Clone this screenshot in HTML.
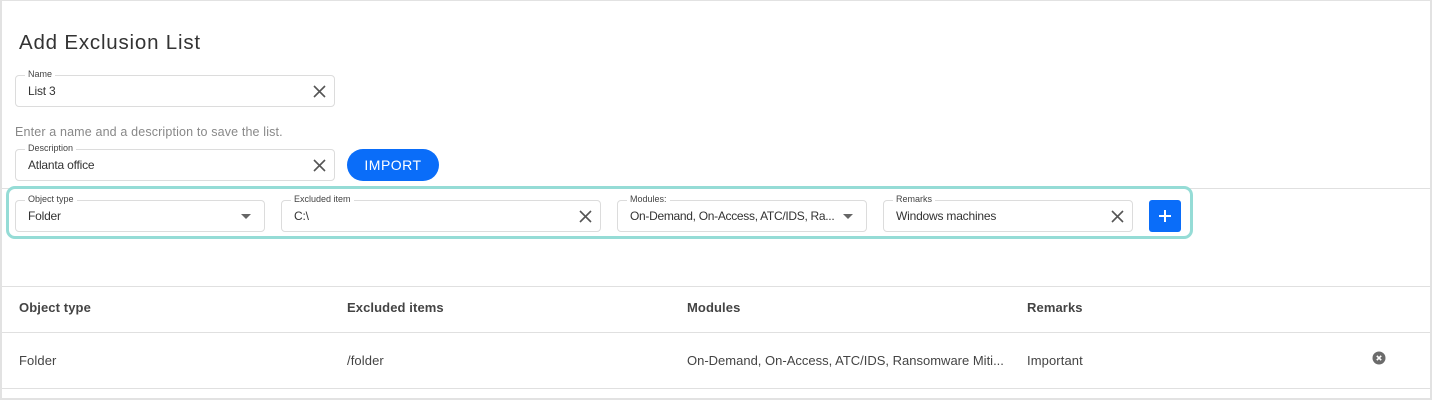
<!DOCTYPE html>
<html><head><style>
*{box-sizing:border-box;margin:0;padding:0}
body{width:1432px;height:400px;background:#fff;font-family:"Liberation Sans",sans-serif;position:relative;overflow:hidden;color:#333}
.frame{position:absolute;left:0;top:0;width:1432px;height:400px;border:2px solid #e2e2e2;border-top:1px solid #e2e2e2}
.abs{position:absolute}
.fld{position:absolute;height:32px;border:1px solid #dcdcdc;border-radius:4px;background:#fff}
.fld .lb{position:absolute;left:9px;top:-8px;font-size:9px;color:#444;background:#fff;padding:0 3px;line-height:12px}
.fld .v{position:absolute;left:12px;top:8px;font-size:12px;color:#333;white-space:nowrap;letter-spacing:-0.2px}
.x{position:absolute;right:8px;top:9px;width:13px;height:13px}
.arr{position:absolute;right:13px;top:13px;width:0;height:0;border-left:5px solid transparent;border-right:5px solid transparent;border-top:5px solid #666}
.th{position:absolute;top:300px;font-size:13px;font-weight:bold;color:#444;letter-spacing:0.1px}
.td{position:absolute;top:353px;font-size:13px;color:#444;white-space:nowrap;letter-spacing:0.1px}
.hl{position:absolute;left:2px;right:2px;height:1px;background:#e0e0e0}
</style></head><body>
<div class="frame"></div>
<div class="abs" style="left:19px;top:31px;font-size:20.5px;color:#333;letter-spacing:0.8px">Add Exclusion List</div>
<div class="fld" style="left:15px;top:75px;width:320px"><span class="lb">Name</span><span class="v">List 3</span>
<svg class="x" viewBox="0 0 13 13"><path d="M1 1L12 12M12 1L1 12" stroke="#555" stroke-width="1.6"/></svg></div>
<div class="abs" style="left:15px;top:125px;font-size:12.5px;color:#888;letter-spacing:0.15px">Enter a name and a description to save the list.</div>
<div class="fld" style="left:15px;top:149px;width:320px"><span class="lb">Description</span><span class="v">Atlanta office</span>
<svg class="x" viewBox="0 0 13 13"><path d="M1 1L12 12M12 1L1 12" stroke="#555" stroke-width="1.6"/></svg></div>
<div class="abs" style="left:347px;top:149px;width:92px;height:32px;border-radius:16px;background:#0a6df9;color:#fff;font-size:14px;text-align:center;line-height:32px;letter-spacing:0.5px">IMPORT</div>
<div class="hl" style="top:188px"></div>
<div class="abs" style="left:6px;top:186px;width:1187px;height:53px;border:3px solid #95dcd6;border-radius:9px;background:#fff"></div>
<div class="fld" style="left:15px;top:200px;width:250px"><span class="lb">Object type</span><span class="v">Folder</span><span class="arr"></span></div>
<div class="fld" style="left:281px;top:200px;width:320px"><span class="lb">Excluded item</span><span class="v">C:\</span>
<svg class="x" viewBox="0 0 13 13"><path d="M1 1L12 12M12 1L1 12" stroke="#555" stroke-width="1.6"/></svg></div>
<div class="fld" style="left:617px;top:200px;width:250px"><span class="lb">Modules:</span><span class="v" style="letter-spacing:-0.3px">On-Demand, On-Access, ATC/IDS, Ra...</span><span class="arr"></span></div>
<div class="fld" style="left:883px;top:200px;width:250px"><span class="lb">Remarks</span><span class="v">Windows machines</span>
<svg class="x" viewBox="0 0 13 13"><path d="M1 1L12 12M12 1L1 12" stroke="#555" stroke-width="1.6"/></svg></div>
<div class="abs" style="left:1149px;top:200px;width:32px;height:32px;border-radius:3px;background:#0a6df9">
<svg class="abs" style="left:9px;top:9px" width="14" height="14" viewBox="0 0 14 14"><path d="M7 1V13M1 7H13" stroke="#fff" stroke-width="2"/></svg></div>
<div class="hl" style="top:286px"></div>
<div class="th" style="left:19px">Object type</div>
<div class="th" style="left:347px">Excluded items</div>
<div class="th" style="left:687px">Modules</div>
<div class="th" style="left:1027px">Remarks</div>
<div class="hl" style="top:332px"></div>
<div class="td" style="left:19px">Folder</div>
<div class="td" style="left:347px">/folder</div>
<div class="td" style="left:687px;letter-spacing:0">On-Demand, On-Access, ATC/IDS, Ransomware Miti...</div>
<div class="td" style="left:1027px">Important</div>
<svg class="abs" style="left:1372px;top:351px" width="14" height="14" viewBox="0 0 14 14"><circle cx="7" cy="7" r="6.5" fill="#6b6b6b"/><path d="M4.8 4.8L9.2 9.2M9.2 4.8L4.8 9.2" stroke="#fff" stroke-width="1.6"/></svg>
<div class="hl" style="top:388px"></div>
</body></html>
